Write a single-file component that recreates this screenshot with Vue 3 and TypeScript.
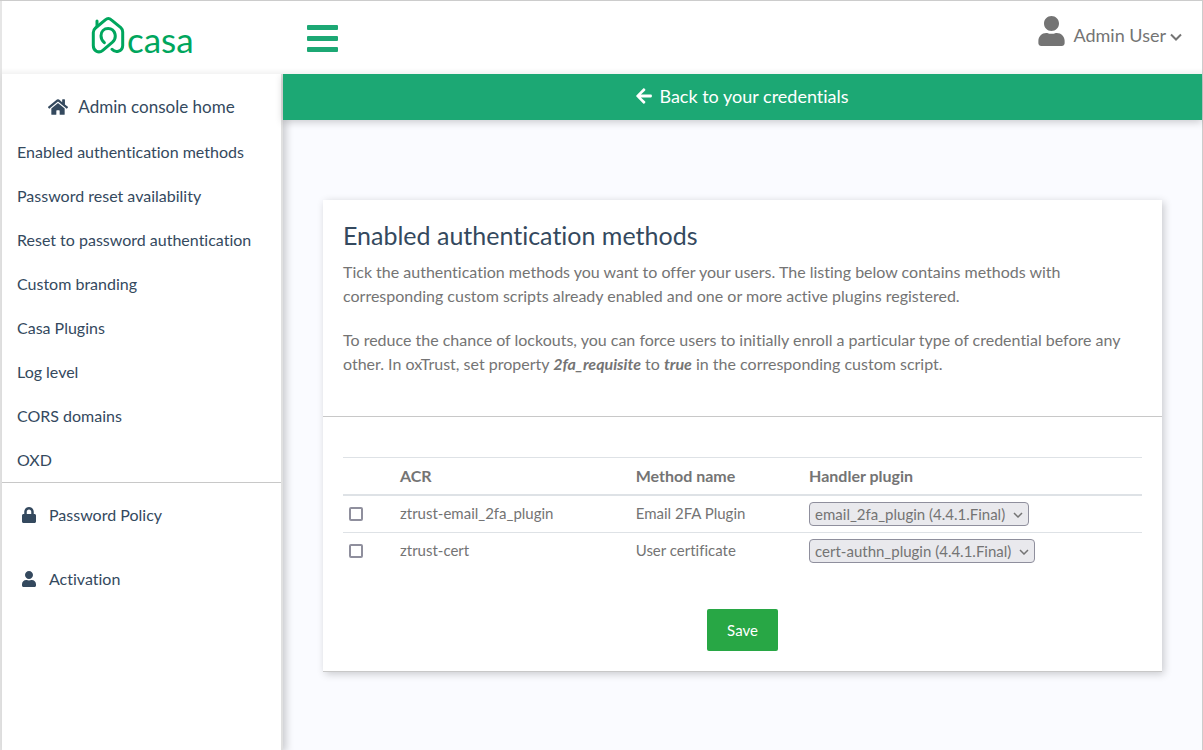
<script setup lang="ts">
import { ref } from 'vue'

interface Method {
  acr: string
  name: string
  plugin: string
  enabled: boolean
}

const links: string[] = [
  'Enabled authentication methods',
  'Password reset availability',
  'Reset to password authentication',
  'Custom branding',
  'Casa Plugins',
  'Log level',
  'CORS domains',
  'OXD',
]

const methods = ref<Method[]>([
  { acr: 'ztrust-email_2fa_plugin', name: 'Email 2FA Plugin', plugin: 'email_2fa_plugin (4.4.1.Final)', enabled: false },
  { acr: 'ztrust-cert', name: 'User certificate', plugin: 'cert-authn_plugin (4.4.1.Final)', enabled: false },
])

const userPath =
  'M224 256c70.7 0 128-57.3 128-128S294.700 0 224 0 96 57.300 96 128s57.300 128 128 128zm89.600 32h-16.700c-22.200 10.200-46.900 16-72.900 16s-50.600-5.800-72.900-16h-16.700C60.200 288 0 348.200 0 422.400V464c0 26.500 21.500 48 48 48h352c26.500 0 48-21.500 48-48v-41.600c0-74.200-60.200-134.400-134.400-134.400z'
</script>

<template>
  <div class="page">
    <header class="topbar">
      <a class="brand" href="#">
        <svg class="brand-mark" viewBox="0 0 34 38" aria-hidden="true">
          <path d="M6 10V5" />
          <path d="M21 33.300C23 35.500 25 36 27.300 35.300C30 34.600 31.700 32.500 31.700 29.500V16C31.700 14 31.200 13 29.800 11.700L20.300 3.800C18.500 2.200 16.200 2.200 14.300 3.800L4.500 12C3 13.300 2.300 14.500 2.300 16.500V29.500C2.300 35.500 8 37.500 11.800 34.300L21.500 26.200C24 24 24.800 21.500 24 18C23 14.500 20.500 12.500 17.200 12.500C13 12.500 10 15.500 10 19.700C10 22.700 11.200 24.800 13.300 26.700" />
        </svg>
        <span>casa</span>
      </a>
      <button class="burger" type="button" aria-label="Toggle menu">
        <i></i><i></i><i></i>
      </button>
      <button class="account" type="button">
        <svg class="avatar" viewBox="0 0 448 512" aria-hidden="true"><path :d="userPath" /></svg>
        <span>Admin User</span>
        <svg class="caret" viewBox="0 0 12 8" aria-hidden="true"><path d="M1 1.500L6 6.500L11 1.500" /></svg>
      </button>
    </header>

    <div class="body">
      <nav class="sidebar">
        <a class="home" href="#">
          <svg viewBox="0 0 576 512" aria-hidden="true">
            <path d="M280.370 148.260L96 300.110V464a16 16 0 0 0 16 16l112.060-.29a16 16 0 0 0 15.920-16V368a16 16 0 0 1 16-16h64a16 16 0 0 1 16 16v95.640a16 16 0 0 0 16 16.050L464 480a16 16 0 0 0 16-16V300L295.670 148.260a12.190 12.190 0 0 0-15.300 0zM571.600 251.470L488 182.560V44.050a12 12 0 0 0-12-12h-56a12 12 0 0 0-12 12v72.610L318.470 43a48 48 0 0 0-61 0L4.340 251.470a12 12 0 0 0-1.600 16.900l25.500 31A12 12 0 0 0 45.150 301l235.220-193.740a12.190 12.190 0 0 1 15.300 0L530.900 301a12 12 0 0 0 16.900-1.600l25.500-31a12 12 0 0 0-1.700-16.930z" />
          </svg>
          <span>Admin console home</span>
        </a>
        <ul class="links">
          <li v-for="link in links" :key="link"><a href="#">{{ link }}</a></li>
        </ul>
        <ul class="extras">
          <li>
            <a href="#">
              <svg viewBox="0 0 448 512" aria-hidden="true">
                <path d="M400 224h-24v-72C376 68.200 307.800 0 224 0S72 68.200 72 152v72H48c-26.500 0-48 21.500-48 48v192c0 26.500 21.500 48 48 48h352c26.500 0 48-21.500 48-48V272c0-26.500-21.500-48-48-48zm-104 0H152v-72c0-39.700 32.300-72 72-72s72 32.300 72 72v72z" />
              </svg>
              <span>Password Policy</span>
            </a>
          </li>
          <li>
            <a href="#">
              <svg viewBox="0 0 448 512" aria-hidden="true"><path :d="userPath" /></svg>
              <span>Activation</span>
            </a>
          </li>
        </ul>
      </nav>

      <main class="main">
        <a class="back" href="#">
          <svg viewBox="0 0 448 512" aria-hidden="true">
            <path d="M257.500 445.100l-22.200 22.200c-9.400 9.400-24.600 9.400-33.900 0L7 273c-9.400-9.400-9.400-24.600 0-33.900L201.400 44.700c9.400-9.400 24.600-9.400 33.900 0l22.200 22.200c9.500 9.500 9.300 25-.4 34.300L136.600 216H424c13.300 0 24 10.700 24 24v32c0 13.300-10.700 24-24 24H136.600l120.500 114.800c9.800 9.300 10 24.800.4 34.300z" />
          </svg>
          <span>Back to your credentials</span>
        </a>

        <section class="card">
          <div class="intro">
            <h1>Enabled authentication methods</h1>
            <p>
              Tick the authentication methods you want to offer your users. The listing below contains methods with
              corresponding custom scripts already enabled and one or more active plugins registered.
            </p>
            <p>
              To reduce the chance of lockouts, you can force users to initially enroll a particular type of credential
              before any other. In oxTrust, set property <b>2fa_requisite</b> to <b>true</b> in the corresponding custom
              script.
            </p>
          </div>
          <form class="form" @submit.prevent>
            <table>
              <thead>
                <tr>
                  <th class="tick"></th>
                  <th class="acr">ACR</th>
                  <th class="name">Method name</th>
                  <th>Handler plugin</th>
                </tr>
              </thead>
              <tbody>
                <tr v-for="(m, i) in methods" :key="m.acr">
                  <td class="tick"><input :id="`m${i}`" v-model="m.enabled" type="checkbox" /></td>
                  <td><label :for="`m${i}`">{{ m.acr }}</label></td>
                  <td>{{ m.name }}</td>
                  <td>
                    <div class="select">
                      <select :aria-label="`Handler plugin for ${m.acr}`">
                        <option>{{ m.plugin }}</option>
                      </select>
                      <svg viewBox="0 0 10 6" aria-hidden="true"><path d="M1 1L5 5L9 1" /></svg>
                    </div>
                  </td>
                </tr>
              </tbody>
            </table>
            <button class="save" type="submit">Save</button>
          </form>
        </section>
      </main>
    </div>
  </div>
</template>

<style>
body {
  margin: 0;
}
</style>

<style scoped>
* {
  box-sizing: border-box;
}
.page {
  display: flex;
  flex-direction: column;
  min-height: 100vh;
  border: solid #cccccc;
  border-width: 1px 1px 0 0;
  background: #fafbff;
  color: #747474;
  font: 16px/24px Lato, "Liberation Sans", sans-serif;
  font-variant-ligatures: none;
  box-shadow: inset 2px 0 #e6e6e6;
  padding-left: 2px;
}
a {
  color: inherit;
  text-decoration: none;
}
button {
  font: inherit;
  border: 0;
  padding: 0;
  background: none;
  color: inherit;
  cursor: pointer;
}
svg {
  display: block;
  flex: none;
  fill: currentColor;
}
ul {
  list-style: none;
  margin: 0;
  padding: 0;
}
.topbar {
  position: relative;
  z-index: 1;
  display: flex;
  height: 73px;
  background: linear-gradient(#ffffff 67px, #f3f3f3);
}
.brand {
  display: flex;
  width: 281px;
  padding: 15px 0 0 89px;
  gap: 2px;
  color: #00a65d;
  font-size: 35px;
  line-height: 46px;
}
.brand-mark {
  width: 34px;
  height: 38px;
  fill: none;
  stroke: currentColor;
  stroke-width: 3;
  stroke-linecap: round;
  stroke-linejoin: round;
}
.burger {
  display: flex;
  flex-direction: column;
  gap: 6px;
  align-self: flex-start;
  margin: 24px 0 0 24px;
}
.burger i {
  width: 31px;
  height: 5px;
  border-radius: 1px;
  background: #1ca874;
}
.account {
  display: flex;
  align-items: flex-start;
  margin-left: auto;
  padding: 15px 20px 0 0;
  font-size: 18px;
}
.account span {
  margin: 7px 4px 0 8px;
}
.avatar {
  width: 27px;
  height: 30px;
}
.caret {
  width: 12px;
  height: 8px;
  margin-top: 17px;
  fill: none;
  stroke: currentColor;
  stroke-width: 2;
}
.body {
  display: flex;
  flex: 1;
}
.sidebar {
  position: relative;
  flex: 0 0 281px;
  background: #ffffff;
  border-right: 2px solid #e0e0e0;
  box-shadow: 3px 0 8px rgba(0, 0, 0, 0.2);
  color: #34495e;
}
.home {
  display: flex;
  align-items: center;
  justify-content: center;
  gap: 10px;
  height: 66px;
  padding-bottom: 1px;
  font-size: 17px;
}
.home svg {
  width: 20px;
  height: 18px;
}
.links {
  display: grid;
  gap: 20px;
  padding: 0 15px 10px;
  border-bottom: 1px solid #c8c8c8;
}
.links a {
  display: block;
}
.extras a {
  display: flex;
  align-items: center;
  gap: 13px;
  height: 64px;
  padding-left: 20px;
}
.extras svg {
  width: 14px;
  height: 16px;
}
.main {
  flex: 1;
  min-width: 0;
}
.back {
  position: relative;
  display: flex;
  align-items: center;
  justify-content: center;
  gap: 7px;
  height: 46px;
  padding-bottom: 2px;
  background: #1ca874;
  box-shadow: 0 2px 8px rgba(0, 0, 0, 0.2);
  color: #ffffff;
  font-size: 18px;
}
.back svg {
  width: 16px;
  height: 18px;
}
.card {
  margin: 80px 40px;
  background: #ffffff;
  border-bottom: 1px solid #c8c8c8;
  box-shadow: 2px 2px 8px rgba(0, 0, 0, 0.2);
}
.intro {
  padding: 20px;
  border-bottom: 1px solid #c8c8c8;
}
h1 {
  margin: 0 0 10px;
  color: #34495e;
  font-size: 25px;
  line-height: 30px;
  font-weight: 400;
}
p {
  margin: 0 0 20px;
}
b {
  font-style: italic;
}
.form {
  display: flex;
  flex-direction: column;
  align-items: center;
  padding: 40px 20px 20px;
}
table {
  width: 100%;
  border-collapse: separate;
  border-spacing: 0;
  table-layout: fixed;
  text-align: left;
}
th,
td {
  height: 37px;
  padding: 0 5px;
  border-top: 1px solid #dee2e6;
}
thead th {
  height: 39px;
  border-bottom: 2px solid #dee2e6;
}
tbody tr:first-child td {
  height: 36px;
  border-top: 0;
}
td {
  padding-bottom: 2px;
  font-size: 15px;
}
td.tick {
  padding-bottom: 0;
}
.tick {
  width: 52px;
}
.acr {
  width: 29.5%;
}
.name {
  width: 21.7%;
}
input {
  display: block;
  appearance: none;
  width: 14px;
  height: 14px;
  margin: 0 1px;
  border: 2px solid #8f8f9d;
  border-radius: 2px;
  background: #ffffff;
}
input:checked {
  background: #1ca874;
}
.select {
  position: relative;
  display: inline-block;
  vertical-align: middle;
}
select {
  display: block;
  appearance: none;
  height: 24px;
  padding: 0 22px 0 5px;
  border: 1px solid #8f8f9d;
  border-radius: 4px;
  background: #e9e9ed;
  color: inherit;
  font: inherit;
  line-height: 22px;
}
.select svg {
  position: absolute;
  top: 10px;
  right: 6px;
  width: 10px;
  height: 6px;
  fill: none;
  stroke: currentColor;
  stroke-width: 1.5;
  pointer-events: none;
}
.save {
  height: 42px;
  margin-top: 40px;
  padding: 0 20px;
  border-radius: 2px;
  background: #28a745;
  color: #ffffff;
  font-size: 15px;
}
</style>
